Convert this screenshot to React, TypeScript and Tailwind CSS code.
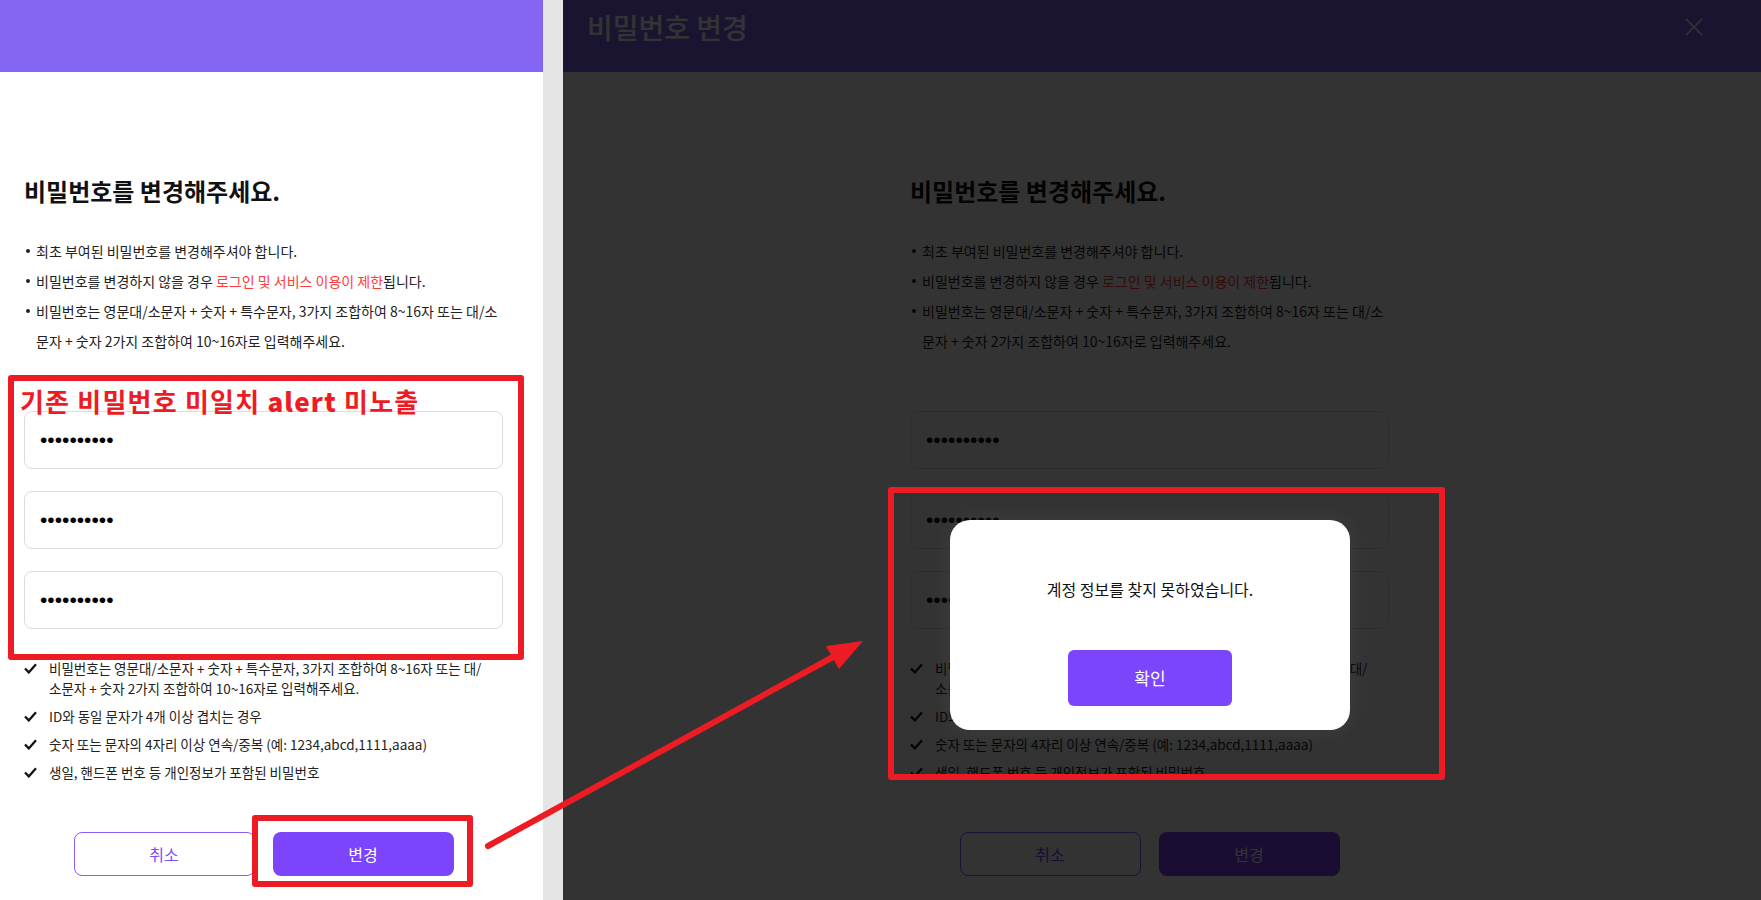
import React from "react";

const guideBullets = [
  <>최초 부여된 비밀번호를 변경해주셔야 합니다.</>,
  <>
    비밀번호를 변경하지 않을 경우 <span className="text-[#ff3b3b]">로그인 및 서비스 이용이 제한</span>됩니다.
  </>,
  <>
    <span className="block whitespace-nowrap">
      비밀번호는 영문대/소문자 + 숫자 + 특수문자, 3가지 조합하여 8~16자 또는 대/소
    </span>
    <span className="block whitespace-nowrap">문자 + 숫자 2가지 조합하여 10~16자로 입력해주세요.</span>
  </>,
];

const rules = [
  <>
    <span className="block whitespace-nowrap">
      비밀번호는 영문대/소문자 + 숫자 + 특수문자, 3가지 조합하여 8~16자 또는 대/
    </span>
    <span className="block whitespace-nowrap">소문자 + 숫자 2가지 조합하여 10~16자로 입력해주세요.</span>
  </>,
  <>ID와 동일 문자가 4개 이상 겹치는 경우</>,
  <>숫자 또는 문자의 4자리 이상 연속/중복 (예: 1234,abcd,1111,aaaa)</>,
  <>생일, 핸드폰 번호 등 개인정보가 포함된 비밀번호</>,
];

const CheckIcon = () => (
  <svg width="13" height="11" viewBox="0 0 13 11" fill="none">
    <path d="M1 5.5 L4.8 9.4 L12 1.2" stroke="#111" strokeWidth="2.3" strokeLinejoin="miter" />
  </svg>
);

const PasswordField = () => (
  <input
    type="password"
    readOnly
    value="qwer123456"
    className="h-[58px] w-full rounded-lg border border-[#dcdcdc] bg-white pl-[15px] font-['Liberation_Sans',sans-serif] text-[21px] text-black outline-none"
  />
);

const PasswordForm = ({ className }: { className: string }) => (
  <div className={`w-[479px] ${className}`}>
    <h2 className="mt-[103px] text-[24px] font-bold leading-[32px] text-[#111]">비밀번호를 변경해주세요.</h2>

    <ul className="mt-[29px] text-[14px] leading-[30px] text-[#222]">
      {guideBullets.map((item, i) => (
        <li key={i} className="flex">
          <span className="flex h-[30px] w-[12px] shrink-0 items-center pl-[2px]">
            <span className="h-[4px] w-[4px] rounded-full bg-[#222]" />
          </span>
          <span>{item}</span>
        </li>
      ))}
    </ul>

    <div className="mt-[55px] flex flex-col gap-[22px]">
      <PasswordField />
      <PasswordField />
      <PasswordField />
    </div>

    <ul className="mt-[29px] flex flex-col gap-2 text-[13.5px] leading-[20px] text-[#222]">
      {rules.map((item, i) => (
        <li key={i} className="flex">
          <span className="flex h-[20px] w-[25px] shrink-0 items-center">
            <CheckIcon />
          </span>
          <span>{item}</span>
        </li>
      ))}
    </ul>

    <div className="mt-[50px] flex justify-center gap-[18px]">
      <button className="h-[44px] w-[181px] rounded-lg border border-[#8b5cf6] bg-white text-[16px] text-[#7c4dff]">
        취소
      </button>
      <button className="h-[44px] w-[181px] rounded-lg bg-[#7c45fb] text-[16px] text-white">변경</button>
    </div>
  </div>
);

export default function App() {
  return (
    <div className="relative flex h-[900px] w-full overflow-hidden font-['Noto_Sans_CJK_KR',sans-serif]">
      {/* plain page */}
      <div className="flex h-full w-[543px] shrink-0 flex-col bg-white">
        <div className="h-[72px] bg-[#8466f2]" />
        <PasswordForm className="ml-[24px]" />
      </div>

      <div className="h-full w-[20px] shrink-0 bg-[#e5e5e5]" />

      {/* page with the alert open */}
      <div className="relative h-full flex-1 bg-white">
        <div className="flex h-[72px] items-start justify-between bg-[#8466f2] pl-[24px] pr-[58px] pt-[9px]">
          <span className="text-[28px] font-medium leading-[36px] text-white">비밀번호 변경</span>
          <span className="flex h-[36px] items-center">
            <svg width="18" height="18" viewBox="0 0 18 18">
              <path d="M1 1 L17 17 M17 1 L1 17" stroke="#fff" strokeWidth="1.6" />
            </svg>
          </span>
        </div>
        <PasswordForm className="ml-[347px]" />

        <div className="absolute inset-0 bg-black/80" />

        <div className="absolute left-[387px] top-[520px] flex h-[210px] w-[400px] flex-col items-center rounded-[20px] bg-white shadow-[0_0_24px_rgba(255,255,255,0.06)]">
          <p className="mt-[58px] text-[16px] leading-[22px] text-[#111]">계정 정보를 찾지 못하였습니다.</p>
          <button className="mt-[50px] h-[56px] w-[164px] rounded-md bg-[#7c45fb] text-[17px] text-white">확인</button>
        </div>
      </div>

      {/* review markup */}
      <div className="pointer-events-none absolute left-[8px] top-[375px] h-[285px] w-[516px] rounded-[3px] border-[6px] border-[#ed1c24]" />
      <div className="pointer-events-none absolute left-[20px] top-[385px] text-[26px] font-bold leading-[32px] tracking-[1.2px] text-[#ed1c24]">
        기존 비밀번호 미일치 <span className="font-black">alert</span> 미노출
      </div>
      <div className="pointer-events-none absolute left-[252px] top-[815px] h-[72px] w-[221px] rounded-[3px] border-[6px] border-[#ed1c24]" />
      <div className="pointer-events-none absolute left-[888px] top-[487px] h-[293px] w-[557px] rounded-[3px] border-[6px] border-[#ed1c24]" />
      <svg className="pointer-events-none absolute left-0 top-0" width="1761" height="900">
        <line x1="488" y1="846" x2="833" y2="657" stroke="#ed1c24" strokeWidth="6" strokeLinecap="round" />
        <polygon points="863,641 839,669 826,646" fill="#ed1c24" />
      </svg>
    </div>
  );
}
